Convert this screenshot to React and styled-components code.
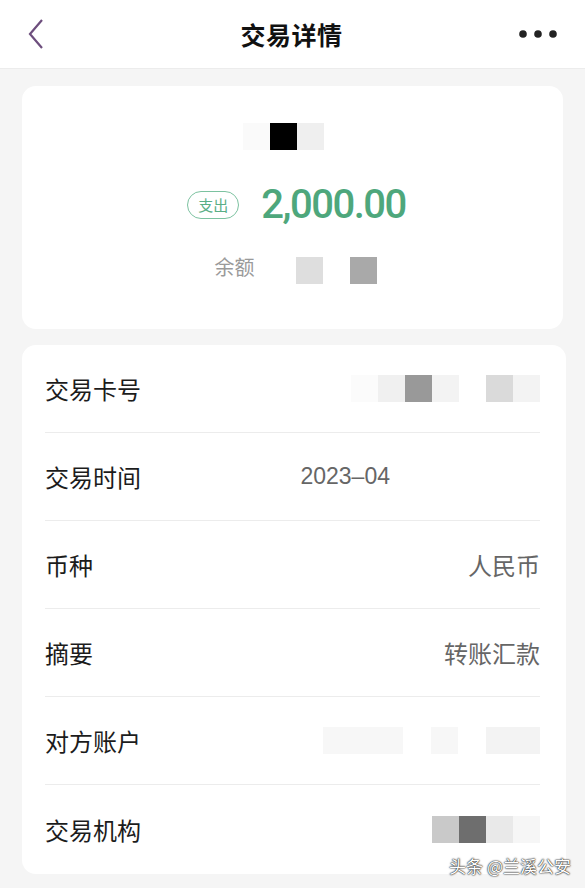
import styled, { createGlobalStyle } from 'styled-components';

const GlobalStyle = createGlobalStyle`
    html, body {
        margin: 0;
        padding: 0;
        background: #f5f5f5;
        font-family: "Noto Sans CJK SC", "Noto Sans", sans-serif;
    }
`

const Page = styled.div`
    position: relative;
    width: 585px;
    height: 888px;
    overflow: hidden;
    background: #f5f5f5;
`
const Header = styled.header`
    display: flex;
    align-items: center;
    justify-content: space-between;
    height: 68px;
    padding: 0 28px 0 26px;
    background: #fff;
    border-bottom: 1px solid #ececec;
`
const Title = styled.h1`
    margin: 0;
    font-size: 25px;
    font-weight: 700;
    color: #111;
    letter-spacing: 0.5px;
`
const IconBtn = styled.div`
    width: 40px;
    display: flex;
    justify-content: ${(p) => (p.$right ? 'flex-end' : 'flex-start')};
`
const Body = styled.main`
    display: flex;
    flex-direction: column;
    gap: 16px;
    padding: 17px 22px 0 22px;
`
const Card = styled.section`
    background: #fff;
    border-radius: 14px;
`
const Summary = styled(Card)`
    height: 243px;
    display: flex;
    flex-direction: column;
    align-items: center;
    padding-top: 37px;
    box-sizing: border-box;
`
const Mosaic = styled.div`
    display: flex;
    align-items: center;
    gap: ${(p) => p.$gap || 0}px;
    margin-left: ${(p) => p.$ml || 0}px;
`
const Block = styled.div`
    width: ${(p) => p.$w || 27}px;
    height: ${(p) => p.$h || 27}px;
    background: ${(p) => p.$c};
`
const AmountRow = styled.div`
    display: flex;
    align-items: center;
    gap: 22px;
    margin-top: 31px;
    margin-left: 8px;
`
const Tag = styled.span`
    border: 1.5px solid #7cc2a0;
    color: #5aae86;
    border-radius: 14px;
    font-size: 15px;
    padding: 2px 10px;
    line-height: 22px;
`
const Amount = styled.span`
    font-family: "Roboto", "Liberation Sans", sans-serif;
    font-size: 40px;
    font-weight: 500;
    color: #4ea77c;
    letter-spacing: -1.5px;
`
const Balance = styled.div`
    display: flex;
    align-items: center;
    margin-top: 29px;
    margin-left: 6px;
`
const BalanceLabel = styled.span`
    font-size: 20px;
    color: #9a9a9a;
    margin-right: 41px;
    margin-top: -8px;
`
const Details = styled(Card)`
    height: 529px;
    padding: 0 26px 0 23px;
    margin-right: -3px;
`
const Row = styled.div`
    display: flex;
    align-items: center;
    justify-content: space-between;
    height: 88px;
    border-bottom: ${(p) => (p.$last ? 'none' : '1px solid #ececec')};
    box-sizing: border-box;
`
const Label = styled.span`
    font-size: 24px;
    color: #1c1c1c;
`
const Value = styled.span`
    font-size: ${(p) => (p.$num ? 23 : 24)}px;
    color: #666;
    font-family: ${(p) => (p.$num ? '"Liberation Sans", "Noto Sans CJK SC", sans-serif' : 'inherit')};
    margin-right: ${(p) => p.$mr || 0}px;
`
const Watermark = styled.div`
    position: absolute;
    right: 14px;
    bottom: 10px;
    font-size: 17px;
    color: #fff;
    text-shadow: 0 0 2px #000, 0 0 1px #000;
`

function App() {
    return (
        <Page>
            <GlobalStyle />
            <Header>
                <IconBtn>
                    <svg width="20" height="32" viewBox="0 0 20 32">
                        <path d="M16 2 L4 16 L16 30" fill="none" stroke="#6d4e7d" strokeWidth="2.2" />
                    </svg>
                </IconBtn>
                <Title>交易详情</Title>
                <IconBtn $right>
                    <svg width="38" height="10" viewBox="0 0 38 10">
                        <circle cx="4" cy="5" r="3.8" fill="#222" />
                        <circle cx="19" cy="5" r="3.8" fill="#222" />
                        <circle cx="34" cy="5" r="3.8" fill="#222" />
                    </svg>
                </IconBtn>
            </Header>
            <Body>
                <Summary>
                    <Mosaic $ml={-18}>
                        <Block $c="#fafafa" />
                        <Block $c="#000" />
                        <Block $c="#efefef" />
                    </Mosaic>
                    <AmountRow>
                        <Tag>支出</Tag>
                        <Amount>2,000.00</Amount>
                    </AmountRow>
                    <Balance>
                        <BalanceLabel>余额</BalanceLabel>
                        <Mosaic $gap={27}>
                            <Block $c="#dedede" />
                            <Block $c="#a9a9a9" />
                        </Mosaic>
                    </Balance>
                </Summary>
                <Details>
                    <Row>
                        <Label>交易卡号</Label>
                        <Mosaic>
                            <Block $c="#fbfbfb" />
                            <Block $c="#f0f0f0" />
                            <Block $c="#999" />
                            <Block $c="#f3f3f3" />
                            <Block $c="#fff" />
                            <Block $c="#dadada" />
                            <Block $c="#f3f3f3" />
                        </Mosaic>
                    </Row>
                    <Row>
                        <Label>交易时间</Label>
                        <Value $num $mr={150}>2023–04</Value>
                    </Row>
                    <Row>
                        <Label>币种</Label>
                        <Value>人民币</Value>
                    </Row>
                    <Row>
                        <Label>摘要</Label>
                        <Value>转账汇款</Value>
                    </Row>
                    <Row>
                        <Label>对方账户</Label>
                        <Mosaic $gap={28}>
                            <Block $c="#f7f7f7" $w={80} />
                            <Block $c="#f7f7f7" />
                            <Block $c="#f3f3f3" $w={54} />
                        </Mosaic>
                    </Row>
                    <Row $last>
                        <Label>交易机构</Label>
                        <Mosaic>
                            <Block $c="#c9c9c9" />
                            <Block $c="#6e6e6e" />
                            <Block $c="#e9e9e9" />
                            <Block $c="#f6f6f6" />
                        </Mosaic>
                    </Row>
                </Details>
            </Body>
            <Watermark>头条 @兰溪公安</Watermark>
        </Page>
    )
}

export default App
